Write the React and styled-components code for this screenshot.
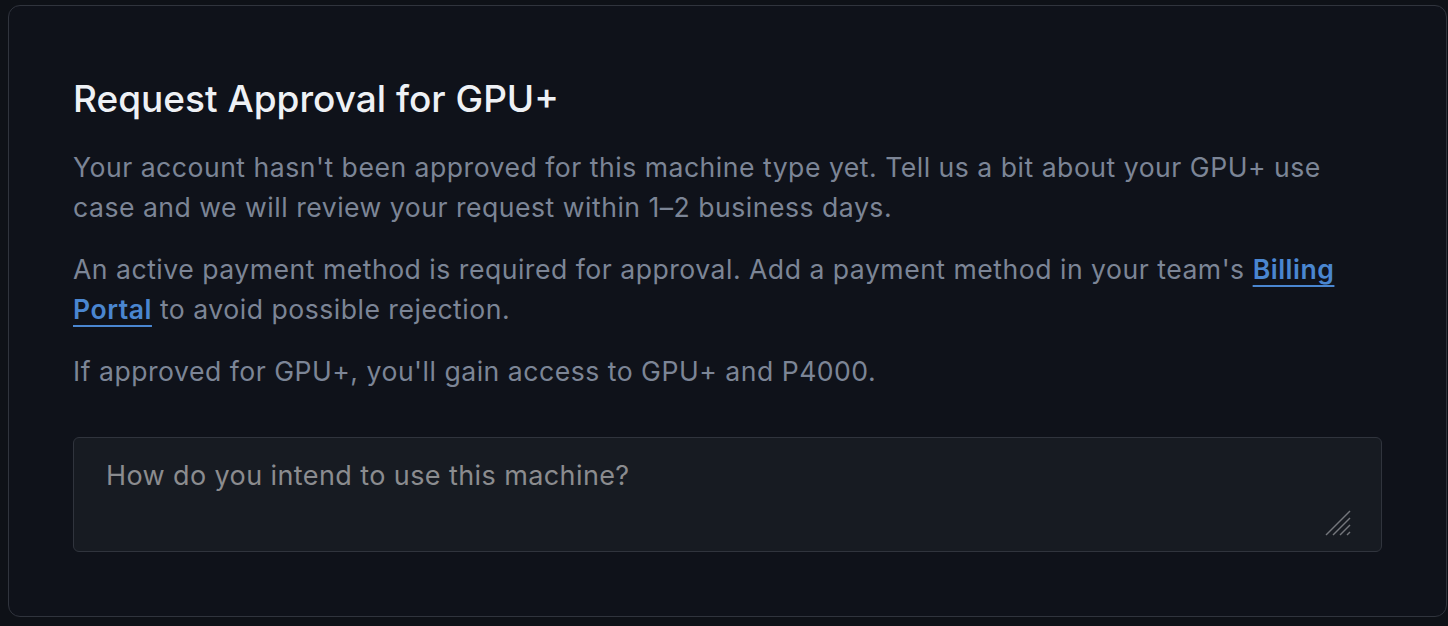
import React, { useState } from 'react';
import styled, { createGlobalStyle } from 'styled-components';

const GlobalStyle = createGlobalStyle`
  html, body {
    margin: 0;
    background: #0e1117;
  }
  body {
    padding: 5px 1px 0 8px;
    font-family: Inter, "Noto Sans", "Liberation Sans", sans-serif;
  }
`;

const Card = styled.section`
  background: #0f121a;
  border: 1px solid #30343d;
  border-radius: 12px;
  padding: 71px 64px 64px 64px;
  display: flex;
  flex-direction: column;
`;

const Title = styled.h2`
  margin: 0 0 26px;
  color: #eef1f5;
  font-size: 37px;
  font-weight: 500;
  line-height: 44px;
  letter-spacing: 0;
`;

const Text = styled.p`
  margin: 0 0 22px;
  max-width: 1290px;
  color: #7c8596;
  font-size: 26.6px;
  line-height: 40px;
  letter-spacing: 0.5px;
`;

const BillingLink = styled.a`
  color: #4a86d0;
  font-weight: 600;
  text-decoration: underline;
  text-decoration-thickness: 2px;
  text-underline-offset: 6px;
  cursor: pointer;
`;

const Field = styled.div`
  position: relative;
  margin-top: 24px;
`;

const Area = styled.textarea`
  display: block;
  box-sizing: border-box;
  width: 100%;
  height: 115px;
  padding: 21px 32px;
  background: #171b22;
  border: 1px solid #30343d;
  border-radius: 6px;
  color: #d0d4da;
  font-family: inherit;
  font-size: 27px;
  line-height: 34px;
  letter-spacing: 0.4px;
  resize: none;
  outline: none;

  &::placeholder {
    color: #8b8c8f;
  }
`;

const Grip = styled.svg`
  position: absolute;
  right: 31px;
  bottom: 16px;
  pointer-events: none;
`;

export default function App() {
  const [useCase, setUseCase] = useState('');

  return (
    <>
      <GlobalStyle />
      <Card>
        <Title>Request Approval for GPU+</Title>
        <Text>
          Your account hasn't been approved for this machine type yet. Tell us a bit about your GPU+ use
          case and we will review your request within 1–2 business days.
        </Text>
        <Text>
          An active payment method is required for approval. Add a payment method in your team's{' '}
          <BillingLink>Billing Portal</BillingLink> to avoid possible rejection.
        </Text>
        <Text>If approved for GPU+, you'll gain access to GPU+ and P4000.</Text>
        <Field>
          <Area
            placeholder="How do you intend to use this machine?"
            value={useCase}
            onChange={(e) => setUseCase(e.target.value)}
          />
          <Grip width="26" height="26" viewBox="0 0 26 26">
            <g stroke="#74777c" strokeWidth="1.4">
              <line x1="1" y1="25" x2="25" y2="1" />
              <line x1="8" y1="25" x2="25" y2="8" />
              <line x1="15" y1="25" x2="25" y2="15" />
              <line x1="22" y1="25" x2="25" y2="22" />
            </g>
          </Grip>
        </Field>
      </Card>
    </>
  );
}
